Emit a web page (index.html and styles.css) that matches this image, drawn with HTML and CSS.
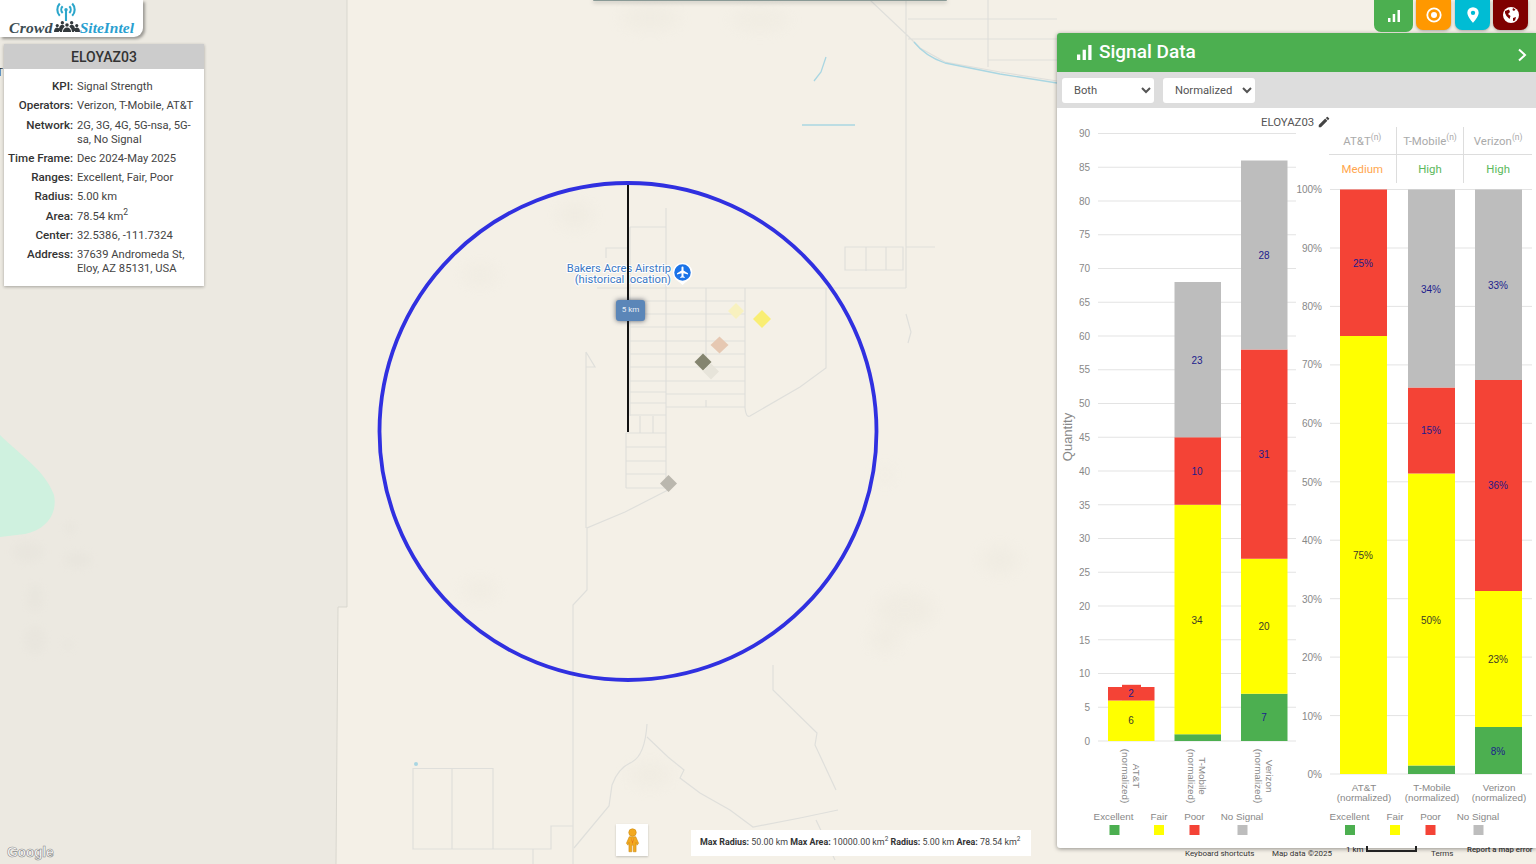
FILE: index.html
```html
<!DOCTYPE html>
<html lang="en">
<head>
<meta charset="utf-8">
<title>CrowdSiteIntel - Signal Data</title>
<link rel="stylesheet" href="styles.css">
</head>
<body>
<div class="app">
  <svg class="map" viewBox="0 0 1536 864" aria-hidden="true">
    <defs>
      <filter id="blur4"><feGaussianBlur stdDeviation="4"/></filter>
      <filter id="blur8"><feGaussianBlur stdDeviation="8"/></filter>
    </defs>
    <rect class="land-a" x="0" y="0" width="1536" height="864"/>
    <path class="land-b" d="M0 0H347V607H338L336 864H0Z"/>
    <path class="park" d="M0 435C20 455 45 470 54 495C58 515 45 530 25 534L0 537Z"/>
    <g class="terrain-l" filter="url(#blur4)">
      <ellipse cx="28" cy="552" rx="16" ry="10"/><ellipse cx="78" cy="560" rx="14" ry="8"/>
      <ellipse cx="35" cy="598" rx="8" ry="14"/><ellipse cx="35" cy="640" rx="10" ry="14"/>
      <ellipse cx="68" cy="645" rx="5" ry="4"/><ellipse cx="70" cy="528" rx="6" ry="5"/>
    </g>
    <g class="terrain-d" filter="url(#blur8)">
      <ellipse cx="480" cy="275" rx="18" ry="10"/><ellipse cx="575" cy="215" rx="18" ry="14"/>
      <ellipse cx="650" cy="18" rx="30" ry="12"/><ellipse cx="905" cy="610" rx="30" ry="18"/>
      <ellipse cx="885" cy="640" rx="16" ry="12"/><ellipse cx="650" cy="775" rx="22" ry="12"/>
      <ellipse cx="885" cy="475" rx="8" ry="8"/><ellipse cx="480" cy="590" rx="18" ry="10"/>
      <ellipse cx="760" cy="20" rx="30" ry="10"/><ellipse cx="1000" cy="560" rx="20" ry="14"/>
    </g>
    <path class="edge" d="M347 0V607H338L336 864"/>
    <path class="road" d="M666 208V487M630 227H666M630 227V416M628 248H606V258M597 288H906M706 288V360M706 400V407M745 288V408M630 301H745M630 314H745M630 327H745M630 341H745M630 354H745M630 367H745M630 381H745M630 392H666M666 394H745M630 403H666M630 415H666M666 407H745M640 416V433M653 416V433M626 433H666M626 433V488M626 447H666M626 461H666M626 474H666M626 488H666"/>
    <path class="road" d="M826 288V368L800 387L750 416Q746 418 745 408M668 490L625 512L587 528V590L573 605V864M586 528V367M586 352V367H595L586 352"/>
    <path class="road" d="M845 247H903V270H845ZM866 247V271M886 247V270M906 0V288M906 247H935M870 0L908 36L920 48L945 62L1000 72L1057 81M908 19H1057M908 39H1057M988 0V67M988 60H1057"/>
    <path class="road" d="M906 314L911 332L908 343M413 768.5H493V849H413ZM452 768.5V849M493 849H551V826H573M533 849V864"/>
    <path class="road" d="M574 848L609 806L612 785Q618 768 632 762Q645 755 647 724M647 737L668 757L684 770L680 778L700 793L730 810L753 827L800 818L838 810M816 820L835 860M773 665V690L817 733L815 745L836 790"/>
    <path class="river" d="M914 42Q925 56 945 63L1000 74L1057 83M826 57L821 72L814 81M802 125H855"/>
    <circle class="river-dot" cx="416" cy="764" r="2"/>

    <g class="diamonds">
      <path class="d-pale" d="M736 303l8 8l-8 8l-8-8Z"/>
      <path class="d-yellow" d="M762 310l9 9l-9 9l-9-9Z"/>
      <path class="d-peach" d="M719.5 336.500l9 8.500l-9 8.500l-9-8.500Z"/>
      <path class="d-light" d="M711 363.500l8 8l-8 8l-8-8Z"/>
      <path class="d-dark" d="M703 353.500l8.500 8.500l-8.500 8.500l-8.500-8.500Z"/>
      <path class="d-grey" d="M668.500 475l8.500 8.500l-8.500 8.500l-8.500-8.500Z"/>
    </g>

    <text class="poi" text-anchor="end" x="671" y="272">Bakers Acres Airstrip</text>
    <text class="poi" text-anchor="end" x="671" y="283">(historical location)</text>
    <circle class="poi-ring" cx="682.500" cy="272.500" r="9"/>
    <path class="poi-pin" d="M678 281L682.500 285L687 281Z"/>
    <path class="poi-plane" d="M688 274.500v-1.200l-4.500-2.800v-3a1 1 0 0 0-2 0v3l-4.500 2.800v1.200l4.500-1.300v3l-1.200 .9v.9l2.200-.6l2.200 .6v-.9l-1.200-.9v-3Z"/>

    <path class="radius-line" d="M628 183V432"/>
    <circle class="radius-circle" cx="628" cy="431.500" r="248.500"/>
  </svg>

  <div class="topstub"></div>

  <div class="tick-t">T</div>

  <header class="logo">
    <svg class="logo-antenna" viewBox="0 0 24 22" aria-hidden="true">
      <circle cx="12" cy="8" r="1.800"/>
      <path class="fillless" d="M12 9V20M8.500 4.500a5 5 0 0 0 0 7M15.500 4.500a5 5 0 0 1 0 7M5.500 1.500a9.500 9.500 0 0 0 0 13M18.500 1.500a9.500 9.500 0 0 1 0 13"/>
    </svg>
    <div class="logo-row">
      <span class="logo-crowd">Crowd</span>
      <svg class="logo-people" viewBox="0 0 28 14" aria-hidden="true">
        <circle cx="3.500" cy="6" r="1.700"/><circle cx="9" cy="3" r="1.800"/><circle cx="14" cy="5.500" r="1.900"/><circle cx="19" cy="3" r="1.800"/><circle cx="24.500" cy="6" r="1.700"/>
        <path d="M0 13Q0 8 3.500 8Q6 8 6.500 11L5 13ZM5.500 9Q6 5 9 5Q11 5 11.500 7Q9 9 8.500 13H6.500ZM9.500 13Q10 8 14 8Q18 8 18.500 13ZM16.500 7Q17 5 19 5Q22 5 22.500 9L21.500 13H19.500Q19 9 16.500 7ZM21.500 11Q22 8 24.500 8Q28 8 28 13H23Z"/>
      </svg>
      <span class="logo-site">SiteIntel</span>
    </div>
  </header>

  <aside class="info">
    <h2 class="info-title">ELOYAZ03</h2>
    <dl class="info-list">
      <dt>KPI:</dt><dd>Signal Strength</dd>
      <dt>Operators:</dt><dd>Verizon, T-Mobile, AT&amp;T</dd>
      <dt>Network:</dt><dd>2G, 3G, 4G, 5G-nsa, 5G-sa, No Signal</dd>
      <dt>Time Frame:</dt><dd>Dec 2024-May 2025</dd>
      <dt>Ranges:</dt><dd>Excellent, Fair, Poor</dd>
      <dt>Radius:</dt><dd>5.00 km</dd>
      <dt>Area:</dt><dd>78.54 km<sup>2</sup></dd>
      <dt>Center:</dt><dd>32.5386, -111.7324</dd>
      <dt>Address:</dt><dd>37639 Andromeda St, Eloy, AZ 85131, USA</dd>
    </dl>
  </aside>

  <div class="radius-tag">5 km</div>

  <nav class="tabs">
    <button class="tab tab-green" type="button" aria-label="Signal data">
      <svg viewBox="0 0 14 14" width="14" height="14"><path class="w" d="M1 9h2.500v4H1ZM5.700 5h2.500v8H5.700ZM10.500 1H13v12h-2.500Z"/></svg>
    </button>
    <button class="tab tab-orange" type="button" aria-label="Target">
      <svg viewBox="0 0 18 18" width="18" height="18"><circle class="ring" cx="9" cy="9" r="6.700"/><circle class="w" cx="9" cy="9" r="3"/></svg>
    </button>
    <button class="tab tab-cyan" type="button" aria-label="Location">
      <svg viewBox="0 0 16 20" width="14" height="18"><path class="w" fill-rule="evenodd" d="M8 1a6.500 6.500 0 0 0-6.500 6.500C1.500 12 8 19 8 19s6.500-7 6.500-11.500A6.500 6.500 0 0 0 8 1Zm0 4a2.500 2.500 0 1 1 0 5a2.500 2.500 0 0 1 0-5Z"/></svg>
    </button>
    <button class="tab tab-maroon" type="button" aria-label="Coverage">
      <svg viewBox="0 0 18 18" width="18" height="18"><circle class="w" cx="9" cy="9" r="8"/><path class="maroon" d="M3 5L7 3.500L8 6L6 8L8.500 10L7.500 13L4.500 10L3 7ZM11 12L14 11L13 14.500L11 15ZM11 2L13.500 3.500L12 5L10.500 4Z"/></svg>
    </button>
  </nav>

  <section class="panel">
    <div class="panel-head">
      <svg class="panel-icon" viewBox="0 0 16 16" aria-hidden="true"><path class="w" d="M0 10h3.500v6H0ZM6 5h3.500v11H6ZM12 0h3.500v16H12Z"/></svg>
      <h1 class="panel-title">Signal Data</h1>
      <svg class="panel-chevron" viewBox="0 0 10 14" aria-hidden="true"><path d="M2 1.500L8 7L2 12.500"/></svg>
    </div>
    <div class="panel-tools">
      <select class="pick pick-a"><option>Both</option></select>
      <select class="pick pick-b"><option>Normalized</option></select>
    </div>
    <div class="panel-body">
      <div class="site-name">ELOYAZ03 <svg class="pencil" viewBox="0 0 24 24" aria-hidden="true"><path d="M3 17.250V21h3.750L17.810 9.940l-3.750-3.750L3 17.250ZM20.710 7.040a1 1 0 0 0 0-1.410l-2.340-2.340a1 1 0 0 0-1.410 0l-1.830 1.830l3.750 3.750l1.830-1.830Z"/></svg></div>

      <svg class="chart-left" viewBox="1058 127 239 721" role="img" aria-label="Quantity by operator">
        <path class="grid" d="M1098 133.500H1296M1098 167.250H1296M1098 201H1296M1098 234.750H1296M1098 268.500H1296M1098 302.250H1296M1098 336H1296M1098 369.750H1296M1098 403.500H1296M1098 437.250H1296M1098 471H1296M1098 504.750H1296M1098 538.500H1296M1098 572.250H1296M1098 606H1296M1098 639.750H1296M1098 673.500H1296M1098 707.250H1296M1098 741H1296"/>
        <g class="axis" text-anchor="end">
          <text x="1090" y="137">90</text><text x="1090" y="171">85</text><text x="1090" y="205">80</text><text x="1090" y="238">75</text><text x="1090" y="272">70</text><text x="1090" y="306">65</text><text x="1090" y="340">60</text><text x="1090" y="373">55</text><text x="1090" y="407">50</text><text x="1090" y="441">45</text><text x="1090" y="475">40</text><text x="1090" y="509">35</text><text x="1090" y="542">30</text><text x="1090" y="576">25</text><text x="1090" y="610">20</text><text x="1090" y="644">15</text><text x="1090" y="677">10</text><text x="1090" y="711">5</text><text x="1090" y="745">0</text>
        </g>
        <text class="axis-title" transform="translate(1071.500 437) rotate(-90)" text-anchor="middle">Quantity</text>

        <rect class="s-yellow" x="1108" y="700.500" width="46.500" height="40.500"/>
        <rect class="s-yellow" x="1122" y="700.500" width="19" height="2"/>
        <rect class="s-red" x="1108" y="687" width="46.500" height="13.500"/>
        <rect class="s-red" x="1122" y="684.800" width="19" height="3"/>

        <rect class="s-green" x="1174.500" y="734.250" width="46.500" height="6.750"/>
        <rect class="s-yellow" x="1174.500" y="504.750" width="46.500" height="229.500"/>
        <rect class="s-red" x="1174.500" y="437.250" width="46.500" height="67.500"/>
        <rect class="s-grey" x="1174.500" y="282" width="46.500" height="155.250"/>

        <rect class="s-green" x="1241" y="693.750" width="46.500" height="47.250"/>
        <rect class="s-yellow" x="1241" y="558.750" width="46.500" height="135"/>
        <rect class="s-red" x="1241" y="349.500" width="46.500" height="209.250"/>
        <rect class="s-grey" x="1241" y="160.500" width="46.500" height="189"/>

        <g class="val" text-anchor="middle">
          <text class="on-yellow" x="1131" y="724">6</text><text x="1131" y="697">2</text>
          <text class="on-yellow" x="1197" y="624">34</text><text x="1197" y="475">10</text><text x="1197" y="364">23</text>
          <text x="1264" y="721">7</text><text class="on-yellow" x="1264" y="630">20</text><text x="1264" y="458">31</text><text x="1264" y="259">28</text>
        </g>

        <g class="cat" text-anchor="middle">
          <text transform="translate(1122 776) rotate(90)">(normalized)</text><text transform="translate(1133 776) rotate(90)">AT&amp;T</text>
          <text transform="translate(1188 776) rotate(90)">(normalized)</text><text transform="translate(1199 776) rotate(90)">T-Mobile</text>
          <text transform="translate(1255 776) rotate(90)">(normalized)</text><text transform="translate(1266 776) rotate(90)">Verizon</text>
        </g>

        <g class="cat" text-anchor="middle">
          <text x="1113.500" y="820">Excellent</text><text x="1159" y="820">Fair</text><text x="1194.500" y="820">Poor</text><text x="1242" y="820">No Signal</text>
        </g>
        <rect class="s-green" x="1109.500" y="825" width="10" height="10"/>
        <rect class="s-yellow" x="1154" y="825" width="10" height="10"/>
        <rect class="s-red" x="1189.500" y="825" width="10" height="10"/>
        <rect class="s-grey" x="1237.500" y="825" width="10" height="10"/>
      </svg>

      <div class="right-col">
        <div class="op-table">
          <div class="op-head">AT&amp;T<sup>(n)</sup></div>
          <div class="op-head">T-Mobile<sup>(n)</sup></div>
          <div class="op-head">Verizon<sup>(n)</sup></div>
          <div class="op-cell medium">Medium</div>
          <div class="op-cell high">High</div>
          <div class="op-cell high">High</div>
        </div>
        <svg class="chart-right" viewBox="1297 183 239 665" role="img" aria-label="Share by operator">
          <path class="grid" d="M1330 189.500H1532M1330 248H1532M1330 306.400H1532M1330 364.900H1532M1330 423.300H1532M1330 481.800H1532M1330 540.200H1532M1330 598.700H1532M1330 657.100H1532M1330 715.600H1532M1330 774H1532"/>
          <g class="axis" text-anchor="end">
            <text x="1322" y="193">100%</text><text x="1322" y="252">90%</text><text x="1322" y="310">80%</text><text x="1322" y="368">70%</text><text x="1322" y="427">60%</text><text x="1322" y="486">50%</text><text x="1322" y="544">40%</text><text x="1322" y="603">30%</text><text x="1322" y="661">20%</text><text x="1322" y="720">10%</text><text x="1322" y="778">0%</text>
          </g>
          <rect class="s-yellow" x="1340" y="336" width="47" height="438"/>
          <rect class="s-red" x="1340" y="189.500" width="47" height="146.500"/>

          <rect class="s-green" x="1408" y="765.500" width="47" height="8.500"/>
          <rect class="s-yellow" x="1408" y="473.500" width="47" height="292"/>
          <rect class="s-red" x="1408" y="387.500" width="47" height="86"/>
          <rect class="s-grey" x="1408" y="189.500" width="47" height="198"/>

          <rect class="s-green" x="1475" y="727" width="47" height="47"/>
          <rect class="s-yellow" x="1475" y="591" width="47" height="136"/>
          <rect class="s-red" x="1475" y="380" width="47" height="211"/>
          <rect class="s-grey" x="1475" y="189.500" width="47" height="190.500"/>

          <g class="val" text-anchor="middle">
            <text class="on-yellow" x="1363" y="559">75%</text><text x="1363" y="267">25%</text>
            <text class="on-yellow" x="1431" y="624">50%</text><text x="1431" y="434">15%</text><text x="1431" y="293">34%</text>
            <text x="1498" y="755">8%</text><text class="on-yellow" x="1498" y="663">23%</text><text x="1498" y="489">36%</text><text x="1498" y="289">33%</text>
          </g>

          <g class="cat" text-anchor="middle">
            <text x="1364" y="791">AT&amp;T</text><text x="1364" y="801">(normalized)</text>
            <text x="1432" y="791">T-Mobile</text><text x="1432" y="801">(normalized)</text>
            <text x="1499" y="791">Verizon</text><text x="1499" y="801">(normalized)</text>
            <text x="1349.500" y="820">Excellent</text><text x="1395" y="820">Fair</text><text x="1430.500" y="820">Poor</text><text x="1478" y="820">No Signal</text>
          </g>
          <rect class="s-green" x="1345" y="825" width="10" height="10"/>
          <rect class="s-yellow" x="1390" y="825" width="10" height="10"/>
          <rect class="s-red" x="1425.500" y="825" width="10" height="10"/>
          <rect class="s-grey" x="1473.500" y="825" width="10" height="10"/>
        </svg>
      </div>
    </div>
  </section>

  <div class="pegman">
    <svg viewBox="0 0 16 26" width="15" height="25" aria-hidden="true">
      <circle class="peg" cx="8" cy="4.500" r="4"/>
      <path class="peg" d="M4.500 9H11.500L14.500 16L12.800 18L11.800 15V25H8.800V18H7.200V25H4.200V15L3.200 18L1.500 16Z"/>
      <path class="peg-tie" d="M6 9L8 14L10 9L8 17Z"/>
    </svg>
  </div>

  <div class="limits"><b>Max Radius:</b> 50.00 km <b>Max Area:</b> 10000.00 km<sup>2</sup> <b>Radius:</b> 5.00 km <b>Area:</b> 78.54 km<sup>2</sup></div>

  <div class="google">Google</div>

  <footer class="attrib">
    <span class="at-keys">Keyboard shortcuts</span>
    <span class="at-data">Map data ©2025</span>
    <span class="at-km">1 km</span>
    <span class="at-scale"></span>
    <span class="at-terms">Terms</span>
    <span class="at-report">Report a map error</span>
  </footer>
</div>
</body>
</html>
```

FILE: styles.css
```css
* { box-sizing: border-box; }
html, body { margin: 0; padding: 0; height: 100%; }
body { overflow: hidden; font-family: Roboto, "Liberation Sans", sans-serif; color: #333; }
.app { position: relative; width: 1536px; height: 864px; overflow: hidden; background: #f4f0e7; }

/* map canvas */
.map { position: absolute; inset: 0; width: 1536px; height: 864px; display: block; }
.land-a { fill: #f4f0e7; }
.land-b { fill: #ece9e1; }
.park { fill: #cff1df; }
.terrain-l { fill: #e4e1d9; opacity: .4; }
.terrain-d { fill: #e9e5da; opacity: .35; }
.edge { fill: none; stroke: #d9d7cf; stroke-width: 1; }
.road { fill: none; stroke: #dfdfdb; stroke-width: 1.2; }
.river { fill: none; stroke: #a9d6e2; stroke-width: 1.3; }
.river-dot { fill: #a9d6e2; }
.d-pale { fill: #f8f1bf; }
.d-yellow { fill: #f9ee74; }
.d-peach { fill: #e6c8b2; }
.d-light { fill: #e7e4da; }
.d-dark { fill: #84846f; }
.d-grey { fill: #bab7ae; }
.poi { font: 11.200px Roboto, sans-serif; fill: #3b78c4; paint-order: stroke; stroke: #fff; stroke-width: 2px; stroke-linejoin: round; }
.poi-ring { fill: #1a73e8; stroke: #fff; stroke-width: 1.500; }
.poi-pin { fill: #fff; }
.poi-plane { fill: #fff; }
.radius-line { stroke: #111; stroke-width: 2; fill: none; }
.radius-circle { fill: none; stroke: #3030e0; stroke-width: 3.800; }

.topstub { position: absolute; left: 593px; top: 0; width: 354px; height: 1px; background: #8a9a96; box-shadow: 0 1px 4px rgba(0,0,0,.5); border-radius: 0 0 4px 4px; }
.tick-t { position: absolute; left: -3px; top: 67px; font-size: 10px; color: #333; }

/* logo */
.logo { position: absolute; left: 0; top: 0; width: 143px; height: 37px; background: #fff; border-bottom-right-radius: 9px; box-shadow: 2px 2px 3px rgba(0,0,0,.35); display: flex; flex-direction: column; align-items: center; }
.logo-antenna { width: 24px; height: 21px; margin-left: -11px; margin-top: 2px; flex: none; fill: #2ba6cb; }
.fillless { fill: none; stroke: #2ba6cb; stroke-width: 2.200; }
.logo-row { display: flex; align-items: flex-end; margin-top: -3px; font: italic bold 15.500px "Liberation Serif", serif; line-height: 15px; white-space: nowrap; }
.logo-crowd { color: #3c4c52; letter-spacing: .3px; }
.logo-site { color: #2a9fd0; }
.logo-people { width: 26px; height: 13px; margin: 0 0 2px 1px; fill: #33393c; }

/* info card */
.info { position: absolute; left: 4px; top: 44px; width: 200px; height: 242px; background: #fff; box-shadow: 0 1px 3px rgba(0,0,0,.3); }
.info-title { margin: 0; height: 25px; background: #ccc; font-size: 14px; font-weight: 500; line-height: 26px; text-align: center; color: #333; }
.info-list { margin: 0; padding: 10px 7px 0 0; display: grid; grid-template-columns: 69px 1fr; align-items: baseline; column-gap: 4px; row-gap: 4.300px; font-size: 11.200px; line-height: 14px; }
.info-list dt { font-weight: 500; font-size: 11.600px; text-align: right; color: #333; white-space: nowrap; }
.info-list dd { margin: 0; color: #444; }
.info-list sup { font-size: 8.500px; line-height: 0; }

.radius-tag { position: absolute; left: 616px; top: 300px; width: 29px; height: 21px; background: #5b86b8; border-radius: 3px; box-shadow: 0 0 5px rgba(40,50,70,.75); color: #e8eef5; font-size: 8px; line-height: 20px; text-align: center; }

/* top tabs */
.tabs { position: absolute; top: 0; left: 1374px; display: flex; align-items: flex-start; gap: 3px; z-index: 1; }
.tab { border: 0; padding: 0; width: 35px; height: 30px; border-radius: 0 0 7px 7px; display: flex; align-items: center; justify-content: center; box-shadow: 0 1px 3px rgba(0,0,0,.3); }
.tab-green { width: 39px; height: 32px; background: #4caf50; margin-right: 0; box-shadow: none; }
.tab-orange { background: #ff9800; margin-left: 0; }
.tab-cyan { background: #00bcd4; margin-left: 1px; }
.tab-maroon { background: #7f0000; }
.w { fill: #fff; }
.ring { fill: none; stroke: #fff; stroke-width: 1.800; }
.maroon { fill: #7f0000; }

/* data panel */
.panel { position: absolute; left: 1057px; top: 33px; width: 479px; height: 815px; background: #fff; border-radius: 3px 0 0 3px; box-shadow: 0 1px 4px rgba(0,0,0,.4); display: flex; flex-direction: column; overflow: hidden; }
.panel-head { flex: none; height: 39px; background: #4caf50; display: flex; align-items: center; padding: 0 9px 0 20px; color: #fff; }
.panel-icon { width: 15px; height: 15px; flex: none; margin-right: 7px; }
.panel-title { margin: -2px 0 0; font-size: 19px; font-weight: 500; line-height: 39px; flex: 1; letter-spacing: 0; }
.panel-chevron { width: 10px; height: 14px; margin-top: 5px; fill: none; stroke: #fff; stroke-width: 2; }
.panel-tools { flex: none; height: 36px; background: #ddd; display: flex; align-items: center; padding: 0 0 0 5px; gap: 9px; }
.pick { height: 25px; width: 92px; border: 0; border-radius: 3px; background: #fff; color: #555; font: 11.200px Roboto, sans-serif; padding: 0 0 0 8px; }
.panel-body { flex: 1; display: grid; grid-template-columns: 239px 239px; grid-template-rows: 19px 1fr; margin-left: 1px; }
.site-name { grid-column: 1 / 3; height: 19px; line-height: 28px; font-size: 11.400px; color: #555; padding-left: 203px; white-space: nowrap; }
.pencil { width: 14px; height: 14px; fill: #444; vertical-align: -3px; }
.chart-left { width: 239px; height: 721px; display: block; overflow: visible; }
.right-col { display: flex; flex-direction: column; }
.chart-right { width: 239px; height: 665px; display: block; flex: none; overflow: visible; }

.op-table { width: 203px; margin-left: 32px; display: grid; grid-template-columns: repeat(3, 1fr); grid-template-rows: 28px 28px; flex: none; font-size: 11.400px; text-align: center; }
.op-head { color: #aaa; line-height: 28px; border-bottom: 1px solid #ddd; border-right: 1px solid #ddd; white-space: nowrap; }
.op-cell { line-height: 28px; border-right: 1px solid #ddd; }
.op-head:nth-child(3), .op-cell:last-child { border-right: 0; }
.op-head sup { font-size: 8.500px; line-height: 0; }
.medium { color: #ffa64d; }
.high { color: #5cb85c; }

/* chart shared */
.grid { stroke: #e3e3e3; stroke-width: 1; fill: none; }
.axis { font: 10px "Liberation Sans", Arial, sans-serif; fill: #888; }
.axis-title { font: 13px "Liberation Sans", Arial, sans-serif; fill: #888; }
.cat { font: 9.800px "Liberation Sans", Arial, sans-serif; fill: #888; }
.val { font: 10px "Liberation Sans", Arial, sans-serif; fill: #1c1c8c; }
.on-yellow { fill: #3c3c28; }
.s-green { fill: #4caf50; }
.s-yellow { fill: #ffff00; }
.s-red { fill: #f44336; }
.s-grey { fill: #bdbdbd; }

/* map chrome */
.pegman { position: absolute; left: 616px; top: 824px; width: 32px; height: 32px; background: #fff; box-shadow: 0 1px 2px rgba(0,0,0,.2); display: flex; align-items: center; justify-content: center; }
.peg { fill: #f3a91f; stroke: #c98a10; stroke-width: .6; }
.peg-tie { fill: #e2761b; }
.limits { position: absolute; left: 691px; top: 830px; width: 340px; height: 26px; background: #fff; padding: 0 8px 0 9px; font-size: 8.900px; line-height: 25px; color: #444; white-space: nowrap; }
.limits b { font-weight: 700; color: #333; }
.limits sup { font-size: 6.500px; line-height: 0; }
.google { position: absolute; left: 7px; top: 844px; font: 700 14px "Liberation Sans", Arial, sans-serif; letter-spacing: -.3px; color: #fff; -webkit-text-stroke: .6px #8a8a8a; }
.attrib { position: absolute; left: 1185px; right: 0; top: 846px; height: 18px; display: flex; align-items: flex-start; font-size: 8px; color: #333; white-space: nowrap; }
.at-keys { margin-top: 3px; width: 87px; }
.at-data { margin-top: 3px; width: 74px; }
.at-km { margin-top: -1px; width: 20px; color: #222; }
.at-scale { width: 51px; height: 6px; margin-top: 0; border: 2px solid #222; border-top: 0; }
.at-terms { margin: 3px 0 0 14px; width: 36px; }
.at-report { margin-top: -1px; font-size: 7.800px; font-weight: 500; }
```
